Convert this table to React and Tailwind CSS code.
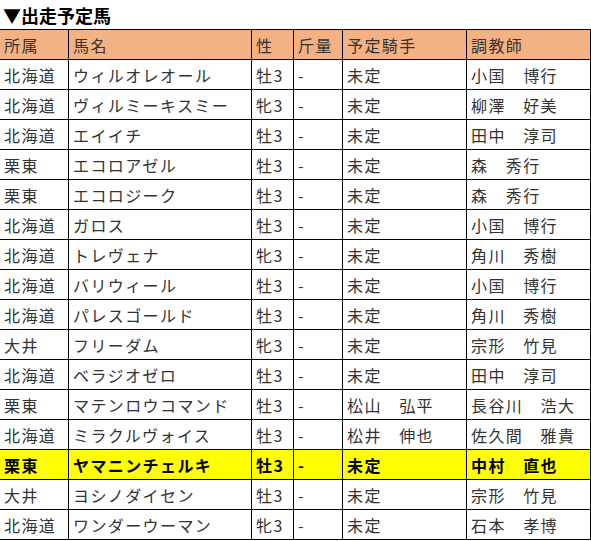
import React from "react";

const rows = [
  ["北海道", "ウィルオレオール", "牡3", "-", "未定", "小国　博行"],
  ["北海道", "ヴィルミーキスミー", "牝3", "-", "未定", "柳澤　好美"],
  ["北海道", "エイイチ", "牡3", "-", "未定", "田中　淳司"],
  ["栗東", "エコロアゼル", "牡3", "-", "未定", "森　秀行"],
  ["栗東", "エコロジーク", "牡3", "-", "未定", "森　秀行"],
  ["北海道", "ガロス", "牡3", "-", "未定", "小国　博行"],
  ["北海道", "トレヴェナ", "牝3", "-", "未定", "角川　秀樹"],
  ["北海道", "バリウィール", "牡3", "-", "未定", "小国　博行"],
  ["北海道", "パレスゴールド", "牡3", "-", "未定", "角川　秀樹"],
  ["大井", "フリーダム", "牝3", "-", "未定", "宗形　竹見"],
  ["北海道", "ベラジオゼロ", "牡3", "-", "未定", "田中　淳司"],
  ["栗東", "マテンロウコマンド", "牡3", "-", "松山　弘平", "長谷川　浩大"],
  ["北海道", "ミラクルヴォイス", "牡3", "-", "松井　伸也", "佐久間　雅貴"],
  ["栗東", "ヤマニンチェルキ", "牡3", "-", "未定", "中村　直也", true],
  ["大井", "ヨシノダイセン", "牡3", "-", "未定", "宗形　竹見"],
  ["北海道", "ワンダーウーマン", "牝3", "-", "未定", "石本　孝博"],
];

const header = ["所属", "馬名", "性", "斤量", "予定騎手", "調教師"];

const font = { fontFamily: '"Noto Sans CJK JP", "Noto Sans", sans-serif' };

function Cell({ children, cls = "" }) {
  return (
    <div
      className={`h-[30px] flex items-center pl-[4px] border-r-[1.5px] border-b-[1.5px] border-black whitespace-nowrap overflow-hidden ${cls}`}
    >
      {children}
    </div>
  );
}

export default function App() {
  return (
    <div className="w-[591px] h-[541px] bg-white overflow-hidden" style={font}>
      <div className="h-[29px] flex items-center pl-[3px] text-[18px] font-bold text-black leading-none">
        ▼出走予定馬
      </div>
      <div className="grid grid-cols-[69px_183px_42px_49px_124px_124px] border-t-[1.5px] border-black text-[16px] tracking-[1.4px] leading-none">
        {header.map((h, i) => (
          <Cell key={i} cls="bg-[#f4b183] text-[#333]">
            {h}
          </Cell>
        ))}
        {rows.map((r, ri) =>
          r.slice(0, 6).map((c, ci) => (
            <Cell
              key={ri + "-" + ci}
              cls={r[6] ? "bg-[#ffff00] text-black font-bold" : "bg-white text-[#333]"}
            >
              {c}
            </Cell>
          ))
        )}
      </div>
    </div>
  );
}
